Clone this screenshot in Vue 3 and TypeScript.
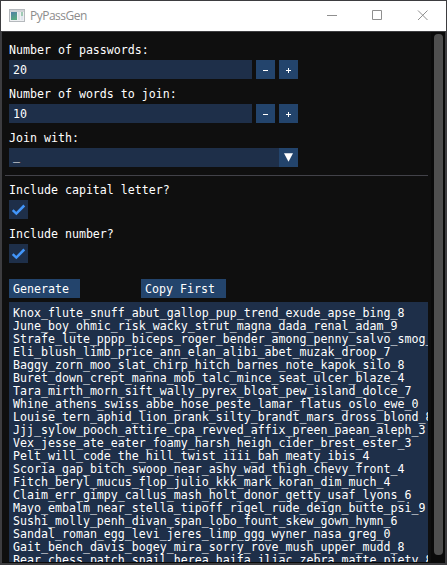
<script setup lang="ts">
import { ref } from 'vue'

interface NumberField {
  label: string
  value: number
}

const fields = ref<NumberField[]>([
  { label: 'Number of passwords:', value: 20 },
  { label: 'Number of words to join:', value: 10 },
])

const options = ref([
  { label: 'Include capital letter?', checked: true },
  { label: 'Include number?', checked: true },
])

const passwords: string[] = [
  'Knox_flute_snuff_abut_gallop_pup_trend_exude_apse_bing_8',
  'June_boy_ohmic_risk_wacky_strut_magna_dada_renal_adam_9',
  'Strafe_lute_pppp_biceps_roger_bender_among_penny_salvo_smog_2',
  'Eli_blush_limb_price_ann_elan_alibi_abet_muzak_droop_7',
  'Baggy_zorn_moo_slat_chirp_hitch_barnes_note_kapok_silo_8',
  'Buret_down_crept_manna_mob_talc_mince_seat_ulcer_blaze_4',
  'Tara_mirth_morn_sift_wally_pyrex_bloat_pew_island_dolce_7',
  'Whine_athens_swiss_abbe_hose_peste_lamar_flatus_oslo_ewe_0',
  'Louise_tern_aphid_lion_prank_silty_brandt_mars_dross_blond_8',
  'Jjj_sylow_pooch_attire_cpa_revved_affix_preen_paean_aleph_3',
  'Vex_jesse_ate_eater_foamy_harsh_heigh_cider_brest_ester_3',
  'Pelt_will_code_the_hill_twist_iiii_bah_meaty_ibis_4',
  'Scoria_gap_bitch_swoop_near_ashy_wad_thigh_chevy_front_4',
  'Fitch_beryl_mucus_flop_julio_kkk_mark_koran_dim_much_4',
  'Claim_err_gimpy_callus_mash_holt_donor_getty_usaf_lyons_6',
  'Mayo_embalm_near_stella_tipoff_rigel_rude_deign_butte_psi_9',
  'Sushi_molly_penh_divan_span_lobo_fount_skew_gown_hymn_6',
  'Sandal_roman_egg_levi_jeres_limp_ggg_wyner_nasa_greg_0',
  'Gait_bench_davis_bogey_mira_sorry_rove_mush_upper_mudd_8',
  'Bear_chess_patch_snail_herea_haifa_iliac_zebra_matte_piety_8',
]
</script>

<template>
  <div class="window">
    <header class="titlebar">
      <svg class="app-icon" width="16" height="14" viewBox="0 0 16 14">
        <defs>
          <linearGradient id="pane" x1="0" y1="0" x2="0.4" y2="1">
            <stop offset="0" stop-color="#4d7fa6" />
            <stop offset="1" stop-color="#58a982" />
          </linearGradient>
        </defs>
        <rect x="0.5" y="0.5" width="15" height="12" fill="#eef0f2" stroke="#b5b9bd" />
        <rect x="1" y="1" width="14" height="2" fill="#cfd3d7" />
        <rect x="2" y="3" width="6" height="8" fill="url(#pane)" />
        <rect x="9" y="3" width="2" height="8" fill="#dce1e6" />
        <rect x="12" y="3" width="2" height="4" fill="#9fcbb5" />
        <rect x="12" y="7" width="2" height="4" fill="#e0e5ef" />
      </svg>
      <span class="title">PyPassGen</span>
      <svg class="controls" width="102" height="12" viewBox="0 0 102 12" fill="none" stroke="#8f8f8f">
        <path d="M0 5.5h10M45.5.5h9v9h-9z" />
        <path d="M91 .5l9.5 9.5M100.5.5L91 10" />
      </svg>
    </header>
    <div class="body">
      <main class="content">
        <template v-for="f in fields" :key="f.label">
          <div class="label">{{ f.label }}</div>
          <div class="row">
            <div class="field">{{ f.value }}</div>
            <button class="step" @click="f.value--">
              <svg width="5" height="5" viewBox="0 0 5 5"><path d="M0 2.5h5" stroke="#fff" /></svg>
            </button>
            <button class="step" @click="f.value++">
              <svg width="5" height="5" viewBox="0 0 5 5"><path d="M0 2.5h5M2.5 0v5" stroke="#fff" /></svg>
            </button>
          </div>
        </template>
        <div class="label">Join with:</div>
        <div class="combo">
          <span class="combo-text">_</span>
          <span class="arrow">
            <svg width="9" height="9" viewBox="0 0 9 9"><path d="M0 .3h9L4.5 8.7z" fill="#fff" /></svg>
          </span>
        </div>
        <hr class="separator" />
        <template v-for="o in options" :key="o.label">
          <div class="label">{{ o.label }}</div>
          <div class="check" @click="o.checked = !o.checked">
            <svg v-if="o.checked" width="19" height="19" viewBox="0 0 19 19">
              <path d="M3.7 10.2l3.6 3.4 8-8.1" fill="none" stroke="#4296fa" stroke-width="2.5" />
            </svg>
          </div>
        </template>
        <div class="actions">
          <button class="btn generate">Generate</button>
          <button class="btn copy">Copy First</button>
        </div>
        <div class="list">
          <div v-for="p in passwords" :key="p" class="line">{{ p }}</div>
        </div>
      </main>
      <div class="scrollbar"><div class="thumb"></div></div>
    </div>
  </div>
</template>

<style>
body {
  background: #3a3a3d;
}
</style>

<style scoped>
.window {
  box-sizing: border-box;
  width: 447px;
  height: 565px;
  padding: 1px 1px 2px;
  display: flex;
  flex-direction: column;
  background: #3d3d40;
  overflow: hidden;
}
.titlebar {
  height: 30px;
  flex: none;
  display: flex;
  align-items: center;
  padding-left: 8px;
  background: #fff;
}
.app-icon {
  margin-top: -1px;
}
.title {
  margin-left: 5px;
  font: 12px/16px 'Open Sans', 'Noto Sans', sans-serif;
  letter-spacing: -0.5px;
  color: #8c8c8c;
}
.controls {
  margin-left: auto;
  margin-right: 17px;
}
.body {
  flex: 1;
  min-height: 0;
  display: flex;
  margin: 1px 1px 0;
  background: #0f0f0f;
  border-bottom: 1px solid #0b0b0b;
  font: 11.627px/13px 'DejaVu Sans Mono', monospace;
  color: #fff;
  white-space: pre;
}
.content {
  width: 422px;
  flex: none;
  display: flex;
  flex-direction: column;
  padding: 11px 0 0 7px;
  box-sizing: content-box;
}
.label {
  height: 13px;
  flex: none;
  margin-bottom: 4px;
  line-height: 15px;
}
.row {
  display: flex;
  gap: 4px;
  margin-bottom: 8px;
}
.field {
  box-sizing: border-box;
  width: 243px;
  height: 19px;
  padding: 4px 4px 2px;
  background: #1e2f49;
}
.step {
  box-sizing: border-box;
  width: 19px;
  height: 19px;
  padding: 2px 0 0;
  border: 0;
  display: flex;
  align-items: center;
  justify-content: center;
  background: #23446c;
}
.combo {
  width: 289px;
  height: 19px;
  flex: none;
  display: flex;
  background: #1e2f49;
}
.combo-text {
  flex: 1;
  padding: 2px 4px;
}
.arrow {
  width: 19px;
  display: flex;
  align-items: center;
  justify-content: center;
  background: #23446c;
}
.separator {
  width: 423px;
  height: 1px;
  flex: none;
  margin: 8px 0 7px -4px;
  border: 0;
  background: #424249;
}
.check {
  width: 19px;
  height: 19px;
  flex: none;
  margin-bottom: 8px;
  background: #1e2f49;
}
.check svg {
  display: block;
}
.actions {
  display: flex;
  gap: 61px;
  margin: 8px 0 4px;
}
.btn {
  box-sizing: border-box;
  height: 19px;
  padding: 2px 0 0 4px;
  border: 0;
  font: inherit;
  color: inherit;
  text-align: left;
  background: #23446c;
}
.generate {
  width: 71px;
}
.copy {
  width: 85px;
}
.list {
  box-sizing: border-box;
  width: 419px;
  flex: 1;
  min-height: 0;
  padding: 5px 0 0 4px;
  overflow: hidden;
  background: #1e2f49;
}
.line {
  height: 13px;
}
.scrollbar {
  flex: 1;
  padding: 2px 2px 0 3px;
  background: #0a0a0a;
}
.thumb {
  width: 9px;
  height: 521px;
  border-radius: 4px;
  background: #4f4f4f;
}
</style>
